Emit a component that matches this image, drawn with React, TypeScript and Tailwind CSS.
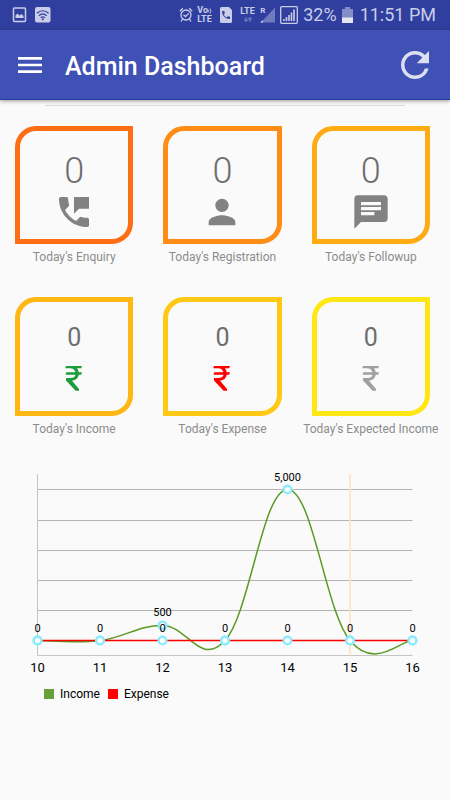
import {
  MdChat,
  MdMenu,
  MdPermPhoneMsg,
  MdPerson,
  MdRefresh,
} from "react-icons/md";
import type { ReactNode } from "react";

function RupeeIcon({ className }: { className: string }) {
  return (
    <svg viewBox="0 0 40 40" className={`size-10 ${className}`} fill="currentColor">
      <path d="M12 7H28L27.2 9.2H22.9C23.9 10.3 24.5 11.7 24.7 13.3H28L27.2 15.7H24.7C24.2 19.1 21.7 21.4 17.9 21.6L25 30.1V31.8H21.6L12 21.5V19H16.2C19.3 19 21.1 17.9 21.5 15.7H11.5L12.3 13.3H21.4C20.8 10.7 19 9.3 16.1 9.2H11.2Z" />
    </svg>
  );
}

type Stat = {
  label: string;
  border: string;
  big?: boolean;
  icon: ReactNode;
};

const stats: Stat[] = [
  {
    label: "Today's Enquiry",
    border: "border-[#ff6d14]",
    big: true,
    icon: <MdPermPhoneMsg className="size-10 text-[#828282]" />,
  },
  {
    label: "Today's Registration",
    border: "border-[#ff8c14]",
    big: true,
    icon: <MdPerson className="size-10 text-[#828282]" />,
  },
  {
    label: "Today's Followup",
    border: "border-[#ffab14]",
    big: true,
    icon: <MdChat className="size-10 text-[#828282]" />,
  },
  {
    label: "Today's Income",
    border: "border-[#ffb714]",
    icon: <RupeeIcon className="text-[#1e9c3c]" />,
  },
  {
    label: "Today's Expense",
    border: "border-[#ffc814]",
    icon: <RupeeIcon className="text-[#ff0000]" />,
  },
  {
    label: "Today's Expected Income",
    border: "border-[#ffe714]",
    icon: <RupeeIcon className="text-[#a0a0a0]" />,
  },
];

function StatusBar() {
  return (
    <div className="flex h-[30px] items-center justify-between bg-[#303f9f] pr-3.5 pl-3 text-[#c9cde8]">
      <div className="flex items-center gap-2">
        {/* Screenshot saved */}
        <svg viewBox="0 0 15 16" className="h-4 w-[15px]">
          <rect x="1.5" y="1" width="12" height="13.5" rx="1" fill="none" stroke="currentColor" strokeWidth="1.5" />
          <path d="M3.5 11V8.5l2-2 2 2 2-1.5 2 2V11z" fill="currentColor" />
        </svg>
        {/* Wifi */}
        <svg viewBox="0 0 16 16" className="size-4" fill="none" stroke="#303f9f" strokeWidth="1.3">
          <rect width="15.5" height="15.5" rx="2" fill="currentColor" stroke="none" />
          <path d="M2 6.3c3.5-3.2 8-3.2 11.5 0M3.9 8.7c2.4-2.2 5.3-2.2 7.7 0M5.7 10.8c1.3-1.2 2.8-1.2 4.1 0" />
          <circle cx="7.8" cy="12.3" r="1" fill="#303f9f" stroke="none" />
        </svg>
      </div>
      <div className="flex items-center">
        {/* Alarm */}
        <svg viewBox="0 0 14 16" className="mr-1 h-4 w-3.5" fill="none" stroke="currentColor" strokeWidth="1.3">
          <circle cx="7" cy="8" r="5" />
          <path d="M.8 4.2l3-3M13.2 4.2l-3-3M3.5 12l-1.5 2.5M10.5 12l1.5 2.5M4.5 7.8l2 1.8 3.2-3.2" />
        </svg>
        <div className="mr-2 w-[15px] text-[9px] leading-[9px] font-bold">
          <div className="flex items-center">
            Vo
            {/* Sound waves */}
            <svg viewBox="0 0 5 8" className="h-2 w-[5px]" fill="none" stroke="currentColor">
              <path d="M.5 2.5q1 1.500 0 3M2.500 1q2 3 0 6" />
            </svg>
          </div>
          <div>LTE</div>
        </div>
        {/* Sim card */}
        <svg viewBox="0 0 12 16" className="mr-2 h-4 w-3">
          <path d="M1.5 0H9l3 3v11.5a1.5 1.5 0 0 1-1.5 1.5h-9A1.5 1.5 0 0 1 0 14.5v-13A1.5 1.5 0 0 1 1.5 0z" fill="currentColor" />
          <path
            transform="translate(.8 2.8) scale(.44)"
            d="M6.62 10.79c1.44 2.83 3.76 5.14 6.59 6.59l2.2-2.2c.27-.27.67-.36 1.02-.24 1.12.37 2.33.57 3.57.57.55 0 1 .45 1 1V20c0 .55-.45 1-1 1-9.39 0-17-7.61-17-17 0-.55.45-1 1-1h3.5c.55 0 1 .45 1 1 0 1.25.2 2.45.57 3.57.11.35.03.74-.25 1.02l-2.2 2.2z"
            fill="#303f9f"
          />
        </svg>
        <div className="mr-1 w-4 text-[9px] leading-[9px] font-bold">
          <div>LTE</div>
          <svg viewBox="0 0 16 7" className="h-[7px] w-4" fill="none" stroke="#6f79bd" strokeWidth="1.2">
            <path d="M6 1v4M4.3 3.5L6 5.3l1.7-1.8M10 6V2M8.3 3.5L10 1.7l1.7 1.8" />
          </svg>
        </div>
        {/* Roaming signal */}
        <div className="relative mr-[5px] h-4 w-[15px] text-[8px] leading-2 font-bold">
          <svg viewBox="0 0 15 16" className="size-full">
            <path d="M15 .5V15.5H1z" fill="#6f79bd" />
            <path d="M3 13v2.5H0z" fill="currentColor" />
          </svg>
          <span className="absolute top-0 left-0">R</span>
        </div>
        <svg viewBox="0 0 18 18" className="mr-[5px] size-[18px]" fill="none" stroke="currentColor">
          <rect x=".7" y=".7" width="16.6" height="16.6" rx="1" strokeWidth="1.3" />
          <path d="M4 15v-2M6.5 15v-4M9 15V9M11.5 15V6.5M14 15V3.5" strokeWidth="1.6" />
        </svg>
        <span className="mr-[5px] text-lg">32%</span>
        {/* Battery */}
        <svg viewBox="0 0 11 16" className="mr-[7px] h-4 w-[11px]">
          <path d="M3 0h5v2h3v9H0V2h3z" fill="#858dc6" />
          <path d="M0 10.5h11V16H0z" fill="#e4e6f4" />
        </svg>
        <span className="text-lg">11:51 PM</span>
      </div>
    </div>
  );
}

function StatCard({ label, border, big, icon }: Stat) {
  return (
    <div className="flex flex-col items-center">
      <div className="w-full px-[15px]">
        <div
          className={`flex aspect-square flex-col items-center justify-center rounded-tl-[21px] rounded-br-[21px] border-[5px] text-[#6e6e6e] ${border} ${big ? "pt-3" : "pt-1"}`}
        >
          <span className={big ? "text-[36px] leading-[42px] font-light" : "text-[25px] leading-[42px]"}>
            0
          </span>
          {icon}
        </div>
      </div>
      <span className="mt-[5px] text-xs whitespace-nowrap text-[#8c8c8c]">
        {label}
      </span>
    </div>
  );
}

const days = [10, 11, 12, 13, 14, 15, 16];
const income = [0, 0, 500, 0, 5000, 0, 0];
const expense = [0, 0, 0, 0, 0, 0, 0];

const px = (i: number) => 37.5 + i * 62.5;
const py = (value: number) => 170.5 - (value / 5000) * 151;

// cubic line through all points, tangent strength 0.2
function curve(values: number[]) {
  const at = (i: number) => {
    const k = Math.min(Math.max(i, 0), values.length - 1);
    return { x: px(k), y: py(values[k]) };
  };
  let d = `M${at(0).x} ${at(0).y}`;
  for (let i = 1; i < values.length; i++) {
    const [a, b, c, e] = [at(i - 2), at(i - 1), at(i), at(i + 1)];
    d += ` C${b.x + (c.x - a.x) * 0.2} ${b.y + (c.y - a.y) * 0.2}`;
    d += ` ${c.x - (e.x - b.x) * 0.2} ${c.y - (e.y - b.y) * 0.2} ${c.x} ${c.y}`;
  }
  return d;
}

function Series({ values, color }: { values: number[]; color: string }) {
  return <path d={curve(values)} fill="none" stroke={color} strokeWidth="1.5" />;
}

function Points({ values }: { values: number[] }) {
  return (
    <>
      {values.map((value, i) => (
        <circle key={i} cx={px(i)} cy={py(value)} r="3.8" fill="#ffffff" stroke="#8ceaff" strokeWidth="2.4" />
      ))}
    </>
  );
}

function PointLabel({ index, value }: { index: number; value: number }) {
  return (
    <text x={px(index)} y={py(value) - 9} fontSize="11" textAnchor="middle">
      {value.toLocaleString("en-US")}
    </text>
  );
}

function Chart() {
  return (
    <svg viewBox="0 0 450 206" className="w-full" role="img" aria-label="Income and Expense">
      <g stroke="#b4b4b4">
        {[19.5, 50.5, 80.5, 110.5, 140.5].map((y) => (
          <path key={y} d={`M37.5 ${y}H412.5`} />
        ))}
        <path d="M37.5 4V185.5H412.5" fill="none" stroke="#c4c4c4" />
      </g>
      <Series values={income} color="#5a9a23" />
      <Series values={expense} color="#ff0000" />
      <path d="M350 4V185.5" stroke="#fde0bd" strokeWidth="1.5" />
      <Points values={income} />
      <Points values={expense} />
      {income.map((value, i) => (
        <PointLabel key={i} index={i} value={value} />
      ))}
      {/* expense labels only where the income point lies elsewhere */}
      {expense.map((value, i) =>
        value === income[i] ? null : <PointLabel key={i} index={i} value={value} />
      )}
      {days.map((day, i) => (
        <text key={day} x={px(i)} y="202" fontSize="13" textAnchor="middle">
          {day}
        </text>
      ))}
    </svg>
  );
}

export default function App() {
  return (
    <div className="min-h-screen bg-[#fafafa] font-[Roboto,sans-serif]">
      <StatusBar />
      <header className="flex h-[70px] items-center border-b border-[#2a3a9e] bg-[#3f51b5] px-3.5 shadow-[0_1px_4px_rgba(0,0,0,0.4)]">
        <button type="button" aria-label="Menu" className="text-white">
          <MdMenu className="size-8" />
        </button>
        <h1 className="ml-[19px] flex-1 pt-1 text-[25px] font-medium text-white">Admin Dashboard</h1>
        <button type="button" aria-label="Refresh" className="text-[#dcdff2]">
          <MdRefresh className="size-[42px]" />
        </button>
      </header>
      <main>
        <div className="mx-[45px] mt-[5px] h-px bg-[#dcdcdc]" />
        <section className="mt-5 mr-[5px] grid grid-cols-3 gap-y-8">
          {stats.map((stat) => (
            <StatCard key={stat.label} {...stat} />
          ))}
        </section>
        <section className="mt-[33px]">
          <Chart />
          <ul className="mt-2.5 ml-11 flex gap-2 text-xs text-black">
            <li className="flex items-center gap-1.5">
              <span className="size-2.5 bg-[#689f38]" />
              Income
            </li>
            <li className="flex items-center gap-1.5">
              <span className="size-2.5 bg-[#ff0000]" />
              Expense
            </li>
          </ul>
        </section>
      </main>
    </div>
  );
}
